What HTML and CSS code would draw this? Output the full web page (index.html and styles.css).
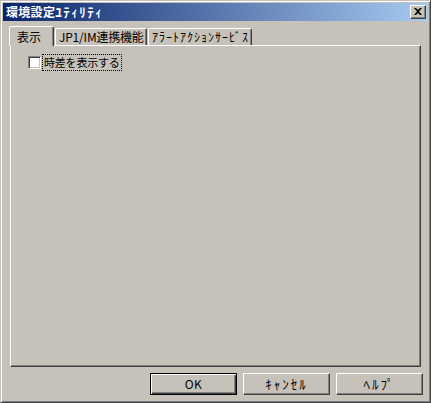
FILE: index.html
```html
<!DOCTYPE html>
<html lang="ja">
<head>
<meta charset="utf-8">
<link rel="stylesheet" href="styles.css">
</head>
<body>
<div class="window">
  <div class="titlebar">
    <span class="title">環境設定<span class="title-kana">ﾕﾃｨﾘﾃｨ</span></span>
    <span class="close"><svg width="8" height="7" viewBox="0 0 8 7"><path d="M0 0h2l2 2 2-2h2L5 3.5 8 7H6L4 5 2 7H0l3-3.5z" fill="#000"/></svg></span>
  </div>
  <div class="body">
    <div class="tabstrip">
      <div class="tab tab-active">表示</div>
      <div class="tab tab-jp1">JP1/IM連携機能</div>
      <div class="tab tab-alert">ｱﾗｰﾄｱｸｼｮﾝｻｰﾋﾞｽ</div>
    </div>
    <div class="panel">
      <label class="check-row">
        <span class="checkbox"></span>
        <span class="check-label">時差を表示する</span>
      </label>
    </div>
    <div class="buttons">
      <button class="btn btn-default">OK</button>
      <button class="btn btn-kana">ｷｬﾝｾﾙ</button>
      <button class="btn btn-kana">ﾍﾙﾌﾟ</button>
    </div>
  </div>
</div>
</body>
</html>
```
FILE: styles.css
```css
html, body {
  margin: 0;
  padding: 0;
  background: #c6c2ba;
}
* { box-sizing: border-box; }
.window {
  width: 431px;
  height: 403px;
  background: #c6c2ba;
  border: 1px solid;
  border-color: #c6c2ba #404040 #404040 #c6c2ba;
  box-shadow: inset 1px 1px #fff, inset -1px -1px #808080;
  padding: 2px;
  display: flex;
  flex-direction: column;
  font-family: "Noto Sans CJK JP", "Liberation Sans", sans-serif;
  font-size: 12px;
  color: #000;
}
.titlebar {
  height: 18px;
  flex: none;
  background: linear-gradient(to right, #0a246a, #a6caf0);
  display: flex;
  align-items: center;
  justify-content: space-between;
  padding-left: 3px;
  padding-right: 2px;
}
.title {
  color: #fff;
  font-weight: bold;
  font-size: 12px;
  line-height: 18px;
  letter-spacing: 0.3px;
}
.title-kana {
  font-size: 13px;
  letter-spacing: 1.5px;
}
.close {
  width: 16px;
  height: 14px;
  background: #c6c2ba;
  border: 1px solid;
  border-color: #fff #404040 #404040 #fff;
  box-shadow: inset -1px -1px #808080;
  display: flex;
  align-items: center;
  justify-content: center;
  padding-bottom: 1px;
}
.body {
  flex: 1;
  display: flex;
  flex-direction: column;
  padding: 5px 7px 5px 7px;
}
.tabstrip {
  height: 19px;
  flex: none;
  display: flex;
  align-items: flex-end;
  margin-left: -1px;
  position: relative;
  z-index: 1;
}
.tab {
  height: 17px;
  background: #c6c2ba;
  border-top: 1px solid #fff;
  border-left: 1px solid #fff;
  border-right: 1px solid #404040;
  box-shadow: inset -1px 0 #808080;
  border-radius: 2px 2px 0 0;
  line-height: 15px;
  font-size: 12px;
  white-space: nowrap;
  margin-left: 1px;
}
.tab-active {
  height: 20px;
  width: 45px;
  margin-left: 0;
  margin-bottom: -1px;
  padding-left: 7px;
  padding-top: 2px;
  font-size: 12px;
}
.tab-jp1 { width: 92px; padding-left: 3px; letter-spacing: -0.2px; }
.tab-alert { width: 104px; padding-left: 3px; letter-spacing: 1px; }
.panel {
  flex: 1;
  border: 1px solid;
  border-color: #fff #404040 #404040 #fff;
  box-shadow: inset -1px -1px #808080;
  padding: 8px 17px;
}
.check-row {
  display: flex;
  align-items: center;
  height: 16px;
}
.checkbox {
  width: 13px;
  height: 13px;
  background: #fff;
  border: 1px solid;
  border-color: #808080 #fff #fff #808080;
  box-shadow: inset 1px 1px #404040, inset -1px -1px #c6c2ba;
  flex: none;
}
.check-label {
  margin-left: 2px;
  padding: 0 1px;
  outline: 1px dotted #000;
  line-height: 15px;
  font-size: 11px;
  letter-spacing: -0.2px;
}
.buttons {
  flex: none;
  display: flex;
  justify-content: flex-end;
  gap: 6px;
  margin-top: 6px;
  margin-right: -2px;
}
.btn {
  width: 87px;
  height: 22px;
  background: #c6c2ba;
  font-family: "Noto Sans CJK JP", "Liberation Sans", sans-serif;
  font-size: 12px;
  color: #000;
  border: 1px solid;
  border-color: #fff #404040 #404040 #fff;
  box-shadow: inset -1px -1px #808080;
  padding: 0;
  line-height: 18px;
  letter-spacing: 0.5px;
}
.btn-kana {
  font-size: 13px;
  letter-spacing: 2px;
}
.btn-default {
  border-color: #000;
  box-shadow: inset 1px 1px #fff, inset -1px -1px #404040, inset -2px -2px #808080;
}
```
